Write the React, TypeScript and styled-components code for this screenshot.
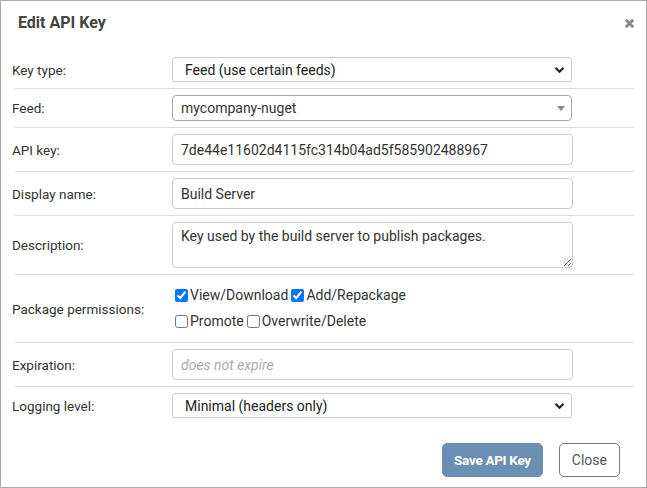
import { FC } from 'react';
import styled, { createGlobalStyle } from 'styled-components';

const GlobalStyle = createGlobalStyle`
  html, body {
    margin: 0;
    padding: 0;
    background: #fff;
  }
  body {
    font-family: Roboto, "Liberation Sans", Arial, sans-serif;
    color: #333;
  }
`;

const Dialog = styled.div`
  box-sizing: border-box;
  width: 647px;
  height: 488px;
  border: 1px solid #aaa;
  background: #fff;
  display: flex;
  flex-direction: column;
`;

const Header = styled.div`
  height: 50px;
  display: flex;
  align-items: flex-start;
  justify-content: space-between;
  padding: 0 11px 0 17px;
`;

const Title = styled.h1`
  margin: 12px 0 0;
  font-size: 16px;
  font-weight: 700;
  color: #444;
  line-height: 20px;
`;

const CloseButton = styled.button`
  margin-top: 17px;
  padding: 0;
  border: 0;
  background: none;
  width: 11px;
  height: 11px;
  display: flex;
  cursor: pointer;
`;

const Form = styled.div`
  display: flex;
  flex-direction: column;
`;

const Row = styled.div<{ $first?: boolean }>`
  display: grid;
  grid-template-columns: 157px 400px;
  align-items: center;
  margin: 0 12px 0 14px;
  padding: 6px 0;
  border-top: ${(p) => (p.$first ? '0' : '1px solid #ddd')};
`;

const Label = styled.label`
  margin-left: -3px;
  font-size: 13.5px;
  color: #333;
`;

const TextInput = styled.input`
  box-sizing: border-box;
  width: 401px;
  height: 31px;
  border: 1px solid #ccc;
  border-radius: 4px;
  padding: 0 8px;
  font-family: inherit;
  font-size: 14px;
  color: #333;
  background: #fff;
  outline: none;

  &::placeholder {
    color: #aaa;
    font-style: italic;
  }
`;

const TextArea = styled.textarea`
  box-sizing: border-box;
  width: 401px;
  height: 46px;
  border: 1px solid #ccc;
  border-radius: 4px;
  padding: 5px 8px;
  font-family: inherit;
  font-size: 14px;
  line-height: 17px;
  color: #333;
  resize: vertical;
  outline: none;
  display: block;
`;

const SelectWrap = styled.div`
  position: relative;
  width: 400px;
`;

const NativeSelect = styled.select<{ $height: number }>`
  box-sizing: border-box;
  width: 400px;
  height: ${(p) => p.$height}px;
  appearance: none;
  border: 1px solid #ccc;
  border-radius: 3px;
  padding: 0 24px 0 12px;
  font-family: inherit;
  font-size: 14px;
  color: #222;
  background: #fff;
  outline: none;
  display: block;
`;

const Chevron = styled.svg`
  position: absolute;
  right: 7px;
  top: 50%;
  margin-top: -4px;
  pointer-events: none;
`;

const ComboBox = styled.div`
  box-sizing: border-box;
  width: 400px;
  height: 26px;
  border: 1px solid #aaa;
  border-radius: 4px;
  display: flex;
  align-items: center;
  justify-content: space-between;
  padding: 0 6px 0 8px;
  font-size: 14px;
  color: #333;
  background: #fff;
`;

const Caret = styled.span`
  width: 0;
  height: 0;
  border-left: 4px solid transparent;
  border-right: 4px solid transparent;
  border-top: 5px solid #888;
`;

const Checks = styled.div`
  display: flex;
  flex-direction: column;
  padding: 1px 0 2px 3px;
`;

const CheckLine = styled.div`
  display: flex;
  align-items: center;
  gap: 3px;
  height: 26px;
`;

const CheckLabel = styled.label`
  display: inline-flex;
  align-items: center;
  gap: 2px;
  font-size: 14px;
  color: #333;

  input {
    margin: 0;
    width: 13px;
    height: 13px;
  }
`;

const Footer = styled.div`
  display: flex;
  justify-content: flex-end;
  gap: 16px;
  padding: 19px 26px 0 0;
`;

const Button = styled.button<{ $primary?: boolean }>`
  box-sizing: border-box;
  height: 34px;
  border-radius: 5px;
  font-family: inherit;
  white-space: nowrap;
  cursor: pointer;
  ${(p) =>
    p.$primary
      ? `
    background: #6a8fb3;
    border: 1px solid #6a8fb3;
    color: #fff;
    font-size: 13.5px;
    letter-spacing: -0.3px;
    font-weight: 700;
    padding: 0 11px;
  `
      : `
    background: #fff;
    border: 1px solid #777;
    color: #555;
    font-size: 14px;
    font-weight: 400;
    padding: 0 12px;
  `}
`;

const ChevronIcon: FC = () => (
  <Chevron width="11" height="8" viewBox="0 0 11 8">
    <path d="M1.5 1.8 L5.5 5.8 L9.5 1.8" fill="none" stroke="#222" strokeWidth="2.2" />
  </Chevron>
);

export default function App() {
  return (
    <>
      <GlobalStyle />
      <Dialog>
        <Header>
          <Title>Edit API Key</Title>
          <CloseButton aria-label="close">
            <svg width="11" height="11" viewBox="0 0 11 11">
              <path d="M1.8 1.8 L9.2 9.2 M9.2 1.8 L1.8 9.2" stroke="#8a8a8a" strokeWidth="3" />
            </svg>
          </CloseButton>
        </Header>
        <Form>
          <Row $first>
            <Label>Key type:</Label>
            <SelectWrap>
              <NativeSelect $height={25} defaultValue="feed">
                <option value="feed">Feed (use certain feeds)</option>
              </NativeSelect>
              <ChevronIcon />
            </SelectWrap>
          </Row>
          <Row>
            <Label>Feed:</Label>
            <ComboBox>
              <span>mycompany-nuget</span>
              <Caret />
            </ComboBox>
          </Row>
          <Row>
            <Label>API key:</Label>
            <TextInput defaultValue="7de44e11602d4115fc314b04ad5f585902488967" />
          </Row>
          <Row>
            <Label>Display name:</Label>
            <TextInput defaultValue="Build Server" />
          </Row>
          <Row>
            <Label>Description:</Label>
            <TextArea defaultValue="Key used by the build server to publish packages." />
          </Row>
          <Row>
            <Label>Package permissions:</Label>
            <Checks>
              <CheckLine>
                <CheckLabel>
                  <input type="checkbox" defaultChecked />
                  View/Download
                </CheckLabel>
                <CheckLabel>
                  <input type="checkbox" defaultChecked />
                  Add/Repackage
                </CheckLabel>
              </CheckLine>
              <CheckLine>
                <CheckLabel>
                  <input type="checkbox" />
                  Promote
                </CheckLabel>
                <CheckLabel>
                  <input type="checkbox" />
                  Overwrite/Delete
                </CheckLabel>
              </CheckLine>
            </Checks>
          </Row>
          <Row>
            <Label>Expiration:</Label>
            <TextInput placeholder="does not expire" />
          </Row>
          <Row>
            <Label>Logging level:</Label>
            <SelectWrap>
              <NativeSelect $height={25} defaultValue="minimal">
                <option value="minimal">Minimal (headers only)</option>
              </NativeSelect>
              <ChevronIcon />
            </SelectWrap>
          </Row>
        </Form>
        <Footer>
          <Button $primary>Save API Key</Button>
          <Button>Close</Button>
        </Footer>
      </Dialog>
    </>
  );
}
